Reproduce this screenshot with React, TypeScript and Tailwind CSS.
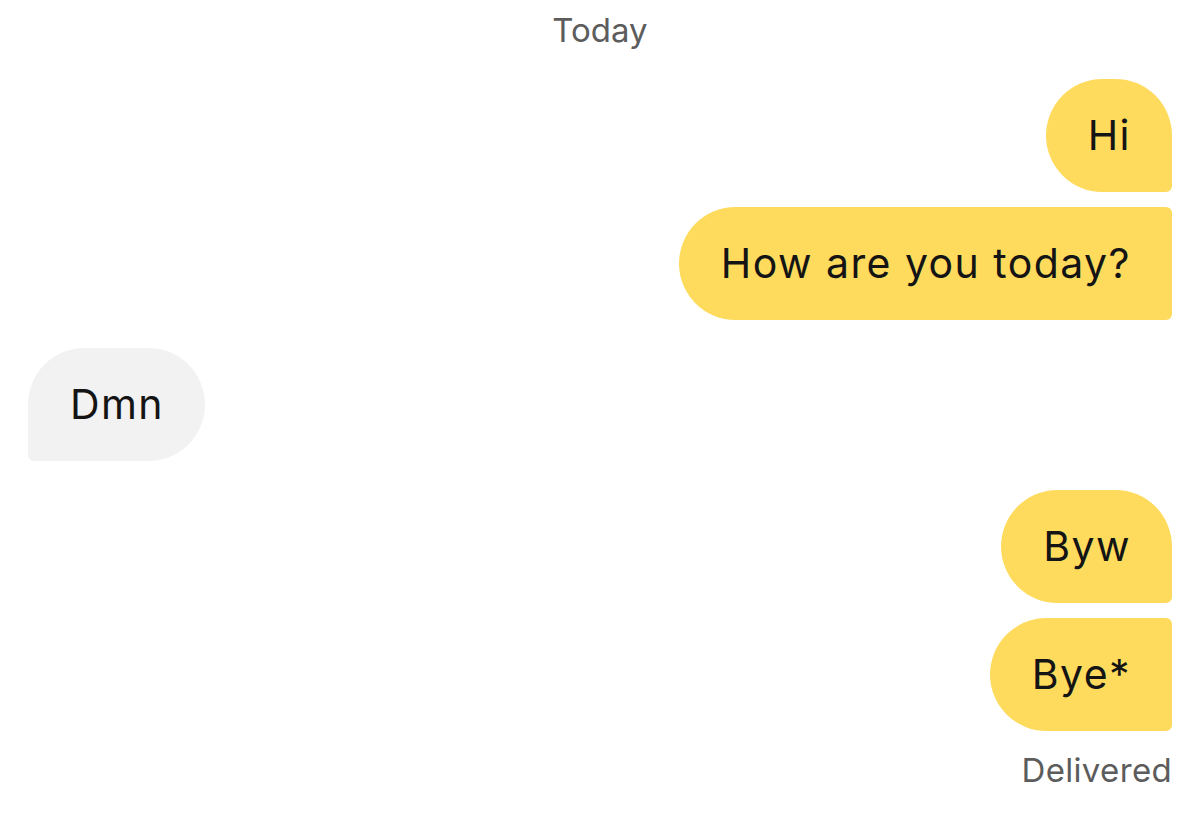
type Message = {
  text: string;
  mine: boolean;
  corners: string;
  gapTop: string;
};

const messages: Message[] = [
  { text: 'Hi', mine: true, corners: 'rounded-tl-[57px] rounded-tr-[57px] rounded-br-[6px] rounded-bl-[57px]', gapTop: 'mt-[26px]' },
  { text: 'How are you today?', mine: true, corners: 'rounded-tl-[57px] rounded-tr-[6px] rounded-br-[6px] rounded-bl-[57px]', gapTop: 'mt-[15px]' },
  { text: 'Dmn', mine: false, corners: 'rounded-tl-[57px] rounded-tr-[57px] rounded-br-[57px] rounded-bl-[6px]', gapTop: 'mt-[28px]' },
  { text: 'Byw', mine: true, corners: 'rounded-tl-[57px] rounded-tr-[57px] rounded-br-[6px] rounded-bl-[57px]', gapTop: 'mt-[29px]' },
  { text: 'Bye*', mine: true, corners: 'rounded-tl-[57px] rounded-tr-[6px] rounded-br-[6px] rounded-bl-[57px]', gapTop: 'mt-[15px]' },
];

export default function App() {
  return (
    <div
      className="w-[1200px] h-[823px] bg-white px-[28px] pt-[7px] flex flex-col"
      style={{ fontFamily: 'Inter, "Noto Sans", sans-serif' }}
    >
      <div className="text-center text-[33px] leading-[46px] text-[#5c5c5c]">Today</div>
      {messages.map((m) => (
        <div key={m.text} className={`flex ${m.mine ? 'justify-end' : 'justify-start'} ${m.gapTop}`}>
          <div
            className={`h-[113px] flex items-center pl-[42px] pr-[41px] text-[41px] tracking-[0.035em] text-[#141414] ${m.corners} ${
              m.mine ? 'bg-[#fedb5d]' : 'bg-[#f2f2f2]'
            }`}
          >
            {m.text}
          </div>
        </div>
      ))}
      <div className="mt-[19px] text-right text-[33px] tracking-[0.01em] leading-[40px] text-[#5c5c5c]">Delivered</div>
    </div>
  );
}
